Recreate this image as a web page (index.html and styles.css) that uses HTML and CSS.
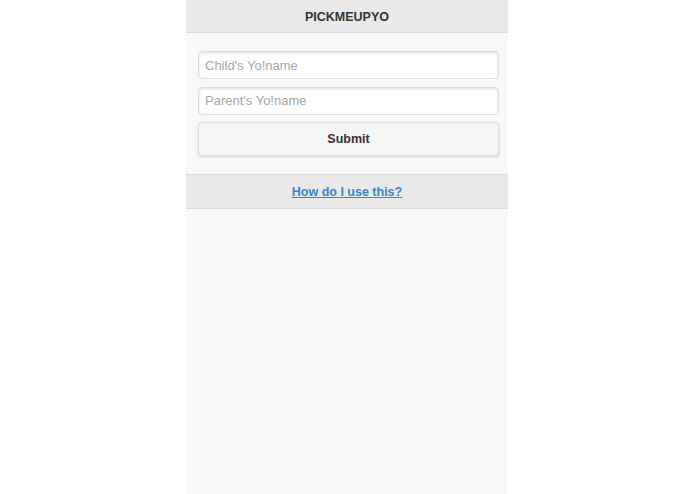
FILE: index.html
```html
<!DOCTYPE html>
<html lang="en">
<head>
    <meta charset="UTF-8">
    <meta name="viewport" content="width=device-width, initial-scale=1.0">
    <title>PickMeUpYo</title>
    <link rel="stylesheet" href="styles.css">
</head>
<body>
    <div class="page">
        <div class="header">
            <h1 class="title">PICKMEUPYO</h1>
        </div>
        <div class="content">
            <form class="yo-form">
                <input type="text" class="text-input" placeholder="Child's Yo!name">
                <input type="text" class="text-input" placeholder="Parent's Yo!name">
                <button type="button" class="submit-btn">Submit</button>
            </form>
        </div>
        <div class="footer">
            <a href="#" class="help-link">How do I use this?</a>
        </div>
    </div>
</body>
</html>
```

FILE: styles.css
```css
* {
    margin: 0;
    padding: 0;
    box-sizing: border-box;
}

html, body {
    height: 100%;
    background: #fff;
    font-family: "Liberation Sans", Arial, sans-serif;
    font-size: 12.5px;
}

.page {
    width: 322px;
    height: 100%;
    margin-left: 186px;
    background: #f9f9f9;
    display: flex;
    flex-direction: column;
}

.header {
    height: 33px;
    background: #e9e9e9;
    border-bottom: 1px solid #dddddd;
    display: flex;
    align-items: center;
    justify-content: center;
}

.title {
    font-size: 12.5px;
    font-weight: bold;
    color: #333;
    padding-top: 1px;
}

.content {
    padding: 18px 9px 18px 12px;
}

.yo-form {
    display: flex;
    flex-direction: column;
    gap: 7.5px;
}

.text-input {
    height: 28px;
    width: 100%;
    border: 1px solid #dddddd;
    border-radius: 4px;
    background: #fff;
    box-shadow: inset 0 1px 3px rgba(0, 0, 0, 0.12);
    padding: 0 6px;
    font-family: inherit;
    font-size: 13px;
    color: #333;
}

.text-input::placeholder {
    color: #a6a6a6;
}

.submit-btn {
    height: 34px;
    width: 100%;
    border: 1px solid #dddddd;
    border-radius: 4px;
    background: #f6f6f6;
    box-shadow: 0 1px 3px rgba(0, 0, 0, 0.15);
    font-family: inherit;
    font-size: 12.5px;
    font-weight: bold;
    color: #333;
}

.footer {
    height: 35px;
    background: #e9e9e9;
    border-top: 1px solid #dddddd;
    border-bottom: 1px solid #dddddd;
    display: flex;
    align-items: center;
    justify-content: center;
}

.help-link {
    color: #3388cc;
    font-weight: bold;
    font-size: 12.5px;
    text-decoration: underline;
}
```
